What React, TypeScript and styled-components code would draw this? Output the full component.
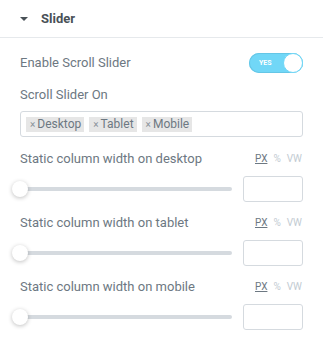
import styled, { createGlobalStyle } from "styled-components";

const GlobalStyle = createGlobalStyle`
  body {
    margin: 0;
    background: #fff;
    font-family: Roboto, "Liberation Sans", Arial, sans-serif;
  }
`;

const SectionHeader = styled.div`
  display: flex;
  align-items: center;
  height: 38px;
  padding-left: 20px;
  border-bottom: 1px solid #e6e9ec;
  box-sizing: border-box;
  color: #495157;
  font-size: 13px;
  font-weight: 700;
`;

const Caret = styled.span`
  width: 0;
  height: 0;
  border-left: 4px solid transparent;
  border-right: 4px solid transparent;
  border-top: 4px solid #495157;
  margin: 1px 13px 0 0;
`;

const Controls = styled.div`
  padding: 0 20px;
`;

const Row = styled.div<{ $top: number }>`
  display: flex;
  align-items: center;
  justify-content: space-between;
  margin-top: ${(p) => p.$top}px;
`;

const Label = styled.div<{ $top: number }>`
  color: #6d7882;
  font-size: 13px;
  line-height: 16px;
  margin-top: ${(p) => p.$top}px;
`;

const Switch = styled.div`
  position: relative;
  width: 54px;
  height: 20px;
  border-radius: 10px;
  background: #71d7f7;
  box-shadow: inset 0 0 0 1px #65c6e6;
  color: #fff;
  font-size: 7px;
  font-weight: 700;
  display: flex;
  align-items: center;
  padding-left: 10px;
  box-sizing: border-box;
`;

const Knob = styled.span`
  position: absolute;
  right: 0;
  top: 0;
  width: 20px;
  height: 20px;
  border-radius: 50%;
  background: #fff;
  border: 1px solid #71d7f7;
  box-sizing: border-box;
`;

const SelectBox = styled.div`
  display: flex;
  align-items: center;
  gap: 5px;
  height: 26px;
  margin-top: 8px;
  padding: 0 5px;
  border: 1px solid #d5dadf;
  border-radius: 3px;
  box-sizing: border-box;
`;

const Tag = styled.span`
  display: flex;
  align-items: center;
  height: 15px;
  padding: 0 3px 0 4px;
  background: #e6e6e6;
  color: #6d7882;
  font-size: 12px;
  line-height: 15px;
`;

const TagX = styled.span`
  font-size: 10px;
  margin-right: 2px;
  color: #8a939b;
`;

const LabelLine = styled.div`
  display: flex;
  align-items: center;
  justify-content: space-between;
`;

const Units = styled.div`
  display: flex;
  gap: 6px;
  font-size: 10px;
  margin-right: 1px;
`;

const Unit = styled.span<{ $active?: boolean }>`
  color: ${(p) => (p.$active ? "#6d7882" : "#c2cbd2")};
  text-decoration: ${(p) => (p.$active ? "underline" : "none")};
`;

const Track = styled.div`
  position: relative;
  width: 212px;
  height: 4px;
  border-radius: 2px;
  background: #d5dadf;
`;

const Handle = styled.span`
  position: absolute;
  left: -8px;
  top: -6px;
  width: 16px;
  height: 16px;
  border-radius: 50%;
  background: #fff;
  box-shadow: 0 1px 4px rgba(0, 0, 0, 0.25);
`;

const NumberInput = styled.div`
  width: 60px;
  height: 26px;
  border: 1px solid #d5dadf;
  border-radius: 3px;
  box-sizing: border-box;
`;

const sliders = ["desktop", "tablet", "mobile"];

export default function App() {
  return (
    <>
      <GlobalStyle />
      <SectionHeader>
        <Caret />
        Slider
      </SectionHeader>
      <Controls>
        <Row $top={15}>
          <Label $top={0}>Enable Scroll Slider</Label>
          <Switch>
            YES
            <Knob />
          </Switch>
        </Row>
        <Label $top={14}>Scroll Slider On</Label>
        <SelectBox>
          {["Desktop", "Tablet", "Mobile"].map((t) => (
            <Tag key={t}>
              <TagX>×</TagX>
              {t}
            </Tag>
          ))}
        </SelectBox>
        {sliders.map((s, i) => (
          <div key={s}>
            <Label $top={i === 0 ? 14 : 13}>
              <LabelLine>
                Static column width on {s}
                <Units>
                  <Unit $active>PX</Unit>
                  <Unit>%</Unit>
                  <Unit>VW</Unit>
                </Units>
              </LabelLine>
            </Label>
            <Row $top={9}>
              <Track>
                <Handle />
              </Track>
              <NumberInput />
            </Row>
          </div>
        ))}
      </Controls>
    </>
  );
}
